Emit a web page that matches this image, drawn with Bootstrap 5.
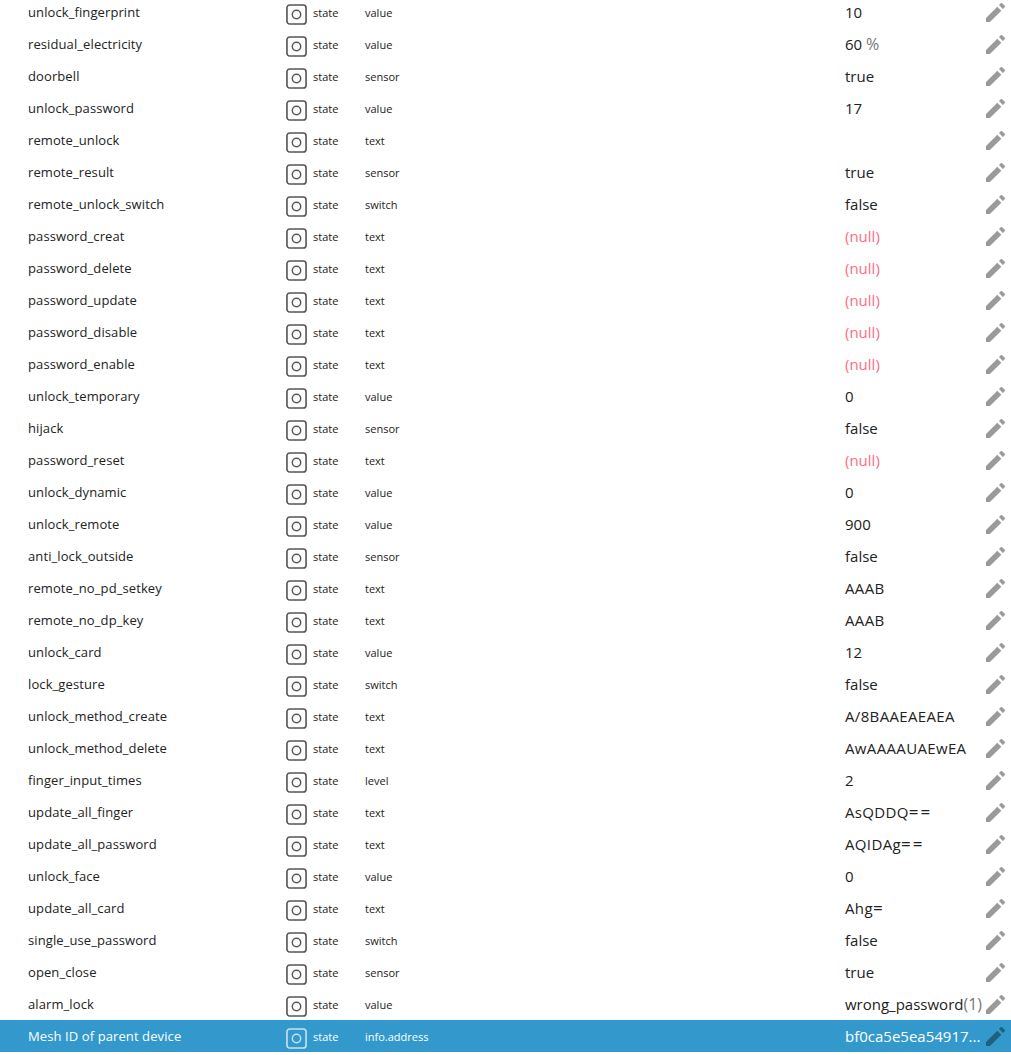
<!DOCTYPE html>
<html lang="en"><head><meta charset="utf-8"><title>Objects</title>
<link href="https://cdn.jsdelivr.net/npm/bootstrap@5.3.0/dist/css/bootstrap.min.css" rel="stylesheet">
<style>
html,body{height:100%;overflow:hidden}
body{font-family:"Open Sans","Noto Sans",sans-serif;background:#fff;color:#212121}
.obj-list{margin-top:-4px}
.obj-row{height:32px;color:#222}
.obj-name{width:286px;padding:2px 0 0 28px;font-size:13px;letter-spacing:.1px}
.obj-ico{width:21px;height:21px;color:#555;margin:4px 6px 0 0}
.obj-type{width:52px;font-size:11px;padding-top:2px}
.obj-role{width:480px;font-size:11px;padding-top:2px}
.obj-val{width:141px;font-size:15px;white-space:nowrap}
.obj-caps{letter-spacing:.35px}
.obj-eq{font-size:17px;letter-spacing:2px;line-height:1}
.obj-unit{color:#777;font-size:16px}
.obj-null{color:#ff6b7f}
.obj-edit{width:19px;height:19px;color:#9a9a9a}
.obj-sel{background:#3399cc;color:#fff}
.obj-sel .obj-ico{color:#c4e2f1}
.obj-sel .obj-edit{color:#1f5f80}
</style></head><body>
<svg width="0" height="0" class="d-block"><defs>
<symbol id="ico-state" viewBox="0 0 22 22"><rect x="1" y="1" width="20" height="20" rx="3" fill="none" stroke="currentColor" stroke-width="1.7"/><circle cx="11" cy="11" r="4.4" fill="none" stroke="currentColor" stroke-width="1.5"/></symbol>
<symbol id="ico-edit" viewBox="3 3 18 18"><path fill="currentColor" d="M3,17.25V21H6.75L17.5,10.25L13.75,6.5L3,17.25Z"/><path fill="currentColor" d="M20.71,7.04C21.1,6.65 21.1,6 20.71,5.63L18.37,3.29C18,2.9 17.35,2.9 16.96,3.29L15.3,4.95L19.05,8.7Z"/></symbol>
</defs></svg>
<div class="obj-list" id="list"></div>
<template id="tpl"><div class="obj-row d-flex align-items-center"><div class="obj-name text-truncate"></div><svg class="obj-ico flex-shrink-0"><use href="#ico-state"/></svg><div class="obj-type">state</div><div class="obj-role"></div><div class="obj-val"></div><svg class="obj-edit flex-shrink-0"><use href="#ico-edit"/></svg></div></template>
<script>
const rows=[["unlock_fingerprint","value","10"],["residual_electricity","value","60 %"],["doorbell","sensor","true"],["unlock_password","value","17"],["remote_unlock","text",""],["remote_result","sensor","true"],["remote_unlock_switch","switch","false"],["password_creat","text","(null)"],["password_delete","text","(null)"],["password_update","text","(null)"],["password_disable","text","(null)"],["password_enable","text","(null)"],["unlock_temporary","value","0"],["hijack","sensor","false"],["password_reset","text","(null)"],["unlock_dynamic","value","0"],["unlock_remote","value","900"],["anti_lock_outside","sensor","false"],["remote_no_pd_setkey","text","AAAB"],["remote_no_dp_key","text","AAAB"],["unlock_card","value","12"],["lock_gesture","switch","false"],["unlock_method_create","text","A/8BAAEAEAEA"],["unlock_method_delete","text","AwAAAAUAEwEA"],["finger_input_times","level","2"],["update_all_finger","text","AsQDDQ=="],["update_all_password","text","AQIDAg=="],["unlock_face","value","0"],["update_all_card","text","Ahg="],["single_use_password","switch","false"],["open_close","sensor","true"],["alarm_lock","value","wrong_password(1)"],["Mesh ID of parent device","info.address","bf0ca5e5ea54917..."]];
const list=document.getElementById('list'),tpl=document.getElementById('tpl');
rows.forEach(([n,r,v],i)=>{const e=tpl.content.cloneNode(true),row=e.firstElementChild;
row.querySelector('.obj-name').textContent=n;row.querySelector('.obj-role').textContent=r;
const c=row.querySelector('.obj-val');
if(v==='(null)'){c.innerHTML='<span class="obj-null">(null)</span>'}
else if(v==='60 %'){c.innerHTML='60 <span class="obj-unit">%</span>'}
else if(v.endsWith('(1)')){c.innerHTML='wrong_password<span class="obj-unit">(1)</span>'}
else if(v.endsWith('=')){c.classList.add('obj-caps');c.innerHTML=v.replace(/=+$/,m=>'<span class="obj-eq">'+m+'</span>')}
else{c.textContent=v;if(/^A/.test(v))c.classList.add('obj-caps')}
if(i===rows.length-1)row.classList.add('obj-sel');list.appendChild(e)});
</script>
<script src="https://cdn.jsdelivr.net/npm/bootstrap@5.3.0/dist/js/bootstrap.bundle.min.js"></script>
</body></html>
